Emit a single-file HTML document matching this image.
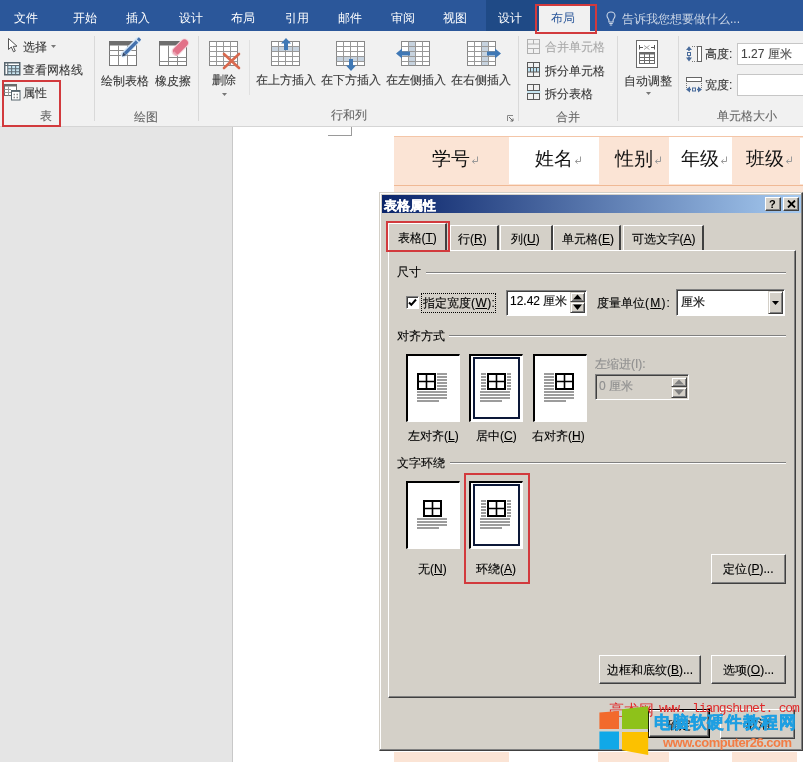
<!DOCTYPE html>
<html><head><meta charset="utf-8">
<style>
*{margin:0;padding:0;box-sizing:border-box}
html,body{width:803px;height:762px;overflow:hidden;background:#fff}
body{position:relative;font-family:"Liberation Sans",sans-serif;font-size:12px;color:#363636}
#ribbon ~ div .t{-webkit-text-stroke:0.1px currentColor}
.dt,.tab,.pbtn{-webkit-text-stroke:0.12px #000}
.a{position:absolute}
.t{position:absolute;white-space:nowrap;line-height:12px;font-size:12px}
#tabs{left:0;top:0;width:803px;height:31px;background:#2b579a}
#tabs .t{color:#fff;top:12px}
#ribbon{left:0;top:31px;width:803px;height:96px;background:#f1f1f1;border-bottom:1px solid #d5d5d5}
.sep{position:absolute;width:1px;background:#d9d9d9}
.gl{color:#666}
#back{left:0;top:127px;width:232px;height:635px;background:#e5e5e5}
#pageedge{left:232px;top:127px;width:1px;height:635px;background:#c8c8c8}
.red{position:absolute;border:2px solid #d23a3d;z-index:10}

.tt{position:absolute;top:149px;font-size:19px;line-height:19px;color:#111;white-space:nowrap}
.tt i{font-style:normal;font-size:9px;color:#888;margin-left:1px}

.btn3d{position:absolute;background:#d4d0c8;border-top:1px solid #fff;border-left:1px solid #fff;border-right:1px solid #404040;border-bottom:1px solid #404040;box-shadow:inset -1px -1px 0 #808080}
.tab{position:absolute;top:225px;height:26px;background:#d4d0c8;border-top:1px solid #fff;border-left:1px solid #fff;border-right:2px solid #404040;font-size:12px;line-height:12px;color:#000;text-align:left;padding-top:7px;white-space:nowrap}
.tab.act{border-right:2px solid #404040;padding-top:8px;z-index:2}
u{text-decoration:underline;text-underline-offset:1px}
.dt{color:#000}
.etch{position:absolute;height:2px;border-top:1px solid #808080;border-bottom:1px solid #fff}
.chk{position:absolute;width:13px;height:13px;background:#fff;border-top:1px solid #808080;border-left:1px solid #808080;border-right:1px solid #fff;border-bottom:1px solid #fff;box-shadow:inset 1px 1px 0 #404040}
.sunk{position:absolute;border-top:1px solid #808080;border-left:1px solid #808080;border-right:1px solid #fff;border-bottom:1px solid #fff;box-shadow:inset 1px 1px 0 #404040}
.spin{position:absolute;background:#d4d0c8;border-top:1px solid #d4d0c8;border-left:1px solid #d4d0c8;border-right:1px solid #404040;border-bottom:1px solid #404040;box-shadow:inset 1px 1px 0 #fff,inset -1px -1px 0 #808080}
.spin svg{position:absolute;left:-1px;top:-1px}
.pic{position:absolute;width:54px;height:68px;background:#fff;border-top:2px solid #000;border-left:2px solid #000;border-right:1px solid #fff;border-bottom:1px solid #fff}
.pic svg{position:absolute;left:-2px;top:-2px}
.pbtn{position:absolute;background:#d4d0c8;border-top:1px solid #fff;border-left:1px solid #fff;border-right:1px solid #404040;border-bottom:1px solid #404040;box-shadow:inset -1px -1px 0 #808080;font-size:12px;line-height:12px;color:#000;text-align:center;white-space:nowrap;padding-top:8px}
.t,.tab,.pbtn,.tt{will-change:transform}
</style></head><body>

<!-- tab bar -->
<div id="tabs" class="a">
  <div class="a" style="left:486px;top:0;width:104px;height:31px;background:#1f4a86"></div>
  <div class="a" style="left:539px;top:6px;width:51px;height:25px;background:#f1f1f1"></div>
  <div class="t" style="left:14px">文件</div>
  <div class="t" style="left:73px">开始</div>
  <div class="t" style="left:126px">插入</div>
  <div class="t" style="left:179px">设计</div>
  <div class="t" style="left:231px">布局</div>
  <div class="t" style="left:285px">引用</div>
  <div class="t" style="left:338px">邮件</div>
  <div class="t" style="left:391px">审阅</div>
  <div class="t" style="left:443px">视图</div>
  <div class="t" style="left:498px">设计</div>
  <div class="t" style="left:551px;color:#2b579a">布局</div>
  <svg class="a" style="left:606px;top:11px" width="10" height="15" viewBox="0 0 10 15"><path d="M5 1C2.5 1 1 2.8 1 4.8C1 6.6 2.4 7.6 2.9 9V11H7.1V9C7.6 7.6 9 6.6 9 4.8C9 2.8 7.5 1 5 1Z" fill="none" stroke="#cbd6e6" stroke-width="1.1"/><path d="M3.2 12.5H6.8M3.8 14H6.2" stroke="#cbd6e6" stroke-width="1"/></svg>
  <div class="t" style="left:622px;top:13px;color:#cbd6e6">告诉我您想要做什么...</div>
</div>
<div class="red" style="left:535px;top:4px;width:62px;height:30px"></div>

<!-- ribbon -->
<div id="ribbon" class="a"></div>


<!-- ribbon content -->
<div class="a" style="left:0;top:31px;width:803px;height:95px">
 <!-- group 表 -->
 <svg class="a" style="left:7px;top:6px" width="12" height="16" viewBox="0 0 12 16"><path d="M1.5 1.5 L1.5 12.5 L4.3 10 L6.5 14.8 L8.3 14 L6.2 9.4 L10 9.2 Z" fill="#fff" stroke="#555" stroke-width="1" stroke-linejoin="round"/></svg>
 <div class="t" style="left:23px;top:10px">选择</div>
 <svg class="a" style="left:51px;top:14px" width="6" height="4"><path d="M0 0H5L2.5 3Z" fill="#777"/></svg>
 <svg class="a" style="left:4px;top:31px" width="17" height="14" viewBox="0 0 17 14"><rect x="0.75" y="0.75" width="15" height="12" fill="#fff"/><rect x="3.75" y="3.5" width="12" height="9.25" fill="#c9e6f2"/><rect x="0.75" y="0.75" width="15" height="12" fill="none" stroke="#58666f" stroke-width="1.5"/><path d="M3.75 0.75V12.75M0.75 3.5H15.75M3.75 6.75H15.75M3.75 9.75H15.75M7.6 3.5V12.75M11.6 3.5V12.75" stroke="#5f6d76" stroke-width="1.1"/></svg>
 <div class="t" style="left:23px;top:32.5px">查看网格线</div>
 <svg class="a" style="left:4px;top:53px" width="17" height="17" viewBox="0 0 17 17"><rect x="0.5" y="0.5" width="12" height="11" fill="#fff" stroke="#6b6b6b"/><rect x="0" y="0" width="13" height="2.5" fill="#6b6b6b"/><path d="M0.5 5.5H7M0.5 8.5H7M4.5 2.5V11.5" stroke="#9a9a9a"/><rect x="7.5" y="6.5" width="8.5" height="9.5" fill="#fff" stroke="#58666f"/><path d="M7.5 7.2H16" stroke="#58666f" stroke-width="1.4"/><path d="M9.5 10.5H11M12.5 10.5H14M9.5 13.5H11M12.5 13.5H14" stroke="#8a8a8a" stroke-width="1.3"/></svg>
 <div class="t" style="left:23px;top:55.5px">属性</div>
 <div class="t gl" style="left:39.5px;top:79px">表</div>
 <div class="sep" style="left:94px;top:5px;height:85px"></div>

 <!-- group 绘图 -->
 <svg class="a" style="left:108px;top:6px" width="36" height="30" viewBox="0 0 36 30"><rect x="1.5" y="4.5" width="27" height="24" fill="#fff" stroke="#777"/><rect x="1" y="4" width="28" height="4.5" fill="#6d6d6d"/><path d="M1.5 13.5H28.5M1.5 18.5H28.5M10.5 8.5V28.5M19.5 8.5V28.5" stroke="#8a8a8a"/><path d="M15.5 17.5L30 3" stroke="#d4e6f6" stroke-width="5.5" stroke-linecap="round"/><path d="M17 16.5L29 4.5" stroke="#4471ad" stroke-width="3.2"/><path d="M30 3.5L32 1.5" stroke="#4471ad" stroke-width="3.2"/><path d="M14 19.5L15.3 15.3L18.5 18.2Z" fill="#35496a"/></svg>
 <div class="t" style="left:101px;top:43.5px">绘制表格</div>
 <svg class="a" style="left:158px;top:6px" width="34" height="30" viewBox="0 0 34 30"><rect x="1.5" y="4.5" width="27" height="24" fill="#fff" stroke="#777"/><rect x="1" y="4" width="28" height="4.5" fill="#6d6d6d"/><path d="M10.5 8.5V28.5M19.5 18V28.5M10.5 20.5H28.5M1.5 24.5H28.5" stroke="#8a8a8a"/><path d="M18 14.5L26.5 6" stroke="#f3d3da" stroke-width="9" stroke-linecap="round"/><path d="M18.5 14L26.5 6" stroke="#e27289" stroke-width="7" stroke-linecap="round"/><path d="M15.5 15L19 18.5" stroke="#eaa0b0" stroke-width="2"/></svg>
 <div class="t" style="left:155px;top:43.5px">橡皮擦</div>
 <div class="t gl" style="left:134px;top:80px">绘图</div>
 <div class="sep" style="left:198px;top:5px;height:85px"></div>

 <!-- group 行和列 -->
 <svg class="a" style="left:208px;top:9px" width="33" height="31" viewBox="0 0 33 31"><rect x="1.5" y="1.5" width="28" height="24" fill="#fff" stroke="#888"/><path d="M1.5 6.5H29.5M1.5 11.5H29.5M1.5 16.5H29.5M1.5 21.5H29.5M8.5 1.5V25.5M15.5 1.5V25.5M22.5 1.5V25.5" stroke="#999"/><path d="M16 14 L31 28 M31 14 L16 28" stroke="#d9694e" stroke-width="2.6" stroke-linecap="round"/></svg>
 <div class="t" style="left:212px;top:43px">删除</div>
 <svg class="a" style="left:222px;top:62px" width="6" height="4"><path d="M0 0H5L2.5 3Z" fill="#777"/></svg>
 <div class="sep" style="left:249px;top:9px;height:55px;background:#e0e0e0"></div>

 <svg class="a" style="left:270px;top:6px" width="31" height="30" viewBox="0 0 31 30"><rect x="1.5" y="4.5" width="28" height="24" fill="#fff" stroke="#888"/><rect x="2" y="9.5" width="27" height="5" fill="#c7d3df"/><path d="M1.5 9.5H29.5M1.5 14.5H29.5M1.5 19.5H29.5M1.5 24.5H29.5M8.5 4.5V28.5M15.5 4.5V28.5M22.5 4.5V28.5" stroke="#999"/><path d="M16 1 L21 6.5 H18 V13 H14 V6.5 H11Z" fill="#3f78b5"/></svg>
 <div class="t" style="left:256px;top:43px">在上方插入</div>
 <svg class="a" style="left:335px;top:9px" width="31" height="32" viewBox="0 0 31 32"><rect x="1.5" y="1.5" width="28" height="24" fill="#fff" stroke="#888"/><rect x="2" y="16.5" width="27" height="5" fill="#c7d3df"/><path d="M1.5 6.5H29.5M1.5 11.5H29.5M1.5 16.5H29.5M1.5 21.5H29.5M8.5 1.5V25.5M15.5 1.5V25.5M22.5 1.5V25.5" stroke="#999"/><path d="M16 31 L21 25.5 H18 V19 H14 V25.5 H11Z" fill="#3f78b5"/></svg>
 <div class="t" style="left:321px;top:43px">在下方插入</div>
 <svg class="a" style="left:396px;top:9px" width="36" height="27" viewBox="0 0 36 27"><rect x="5.5" y="1.5" width="28" height="24" fill="#fff" stroke="#888"/><rect x="12.5" y="2" width="7" height="23" fill="#c7d3df"/><path d="M5.5 6.5H33.5M5.5 11.5H33.5M5.5 16.5H33.5M5.5 21.5H33.5M12.5 1.5V25.5M19.5 1.5V25.5M26.5 1.5V25.5" stroke="#999"/><path d="M0 13.5 L6 8.5 V11.5 H14 V15.5 H6 V18.5Z" fill="#3f78b5"/></svg>
 <div class="t" style="left:386px;top:43px">在左侧插入</div>
 <svg class="a" style="left:466px;top:9px" width="36" height="27" viewBox="0 0 36 27"><rect x="1.5" y="1.5" width="28" height="24" fill="#fff" stroke="#888"/><rect x="15.5" y="2" width="7" height="23" fill="#c7d3df"/><path d="M1.5 6.5H29.5M1.5 11.5H29.5M1.5 16.5H29.5M1.5 21.5H29.5M8.5 1.5V25.5M15.5 1.5V25.5M22.5 1.5V25.5" stroke="#999"/><path d="M35 13.5 L29 8.5 V11.5 H21 V15.5 H29 V18.5Z" fill="#3f78b5"/></svg>
 <div class="t" style="left:451px;top:43px">在右侧插入</div>
 <div class="t gl" style="left:331px;top:78px">行和列</div>
 <svg class="a" style="left:507px;top:84px" width="7" height="7" viewBox="0 0 7 7"><path d="M0.5 6V0.5H6" stroke="#888" fill="none"/><path d="M2 2L6 6M6 3.5V6H3.5" stroke="#666" fill="none"/></svg>
 <div class="sep" style="left:518px;top:5px;height:85px"></div>

 <!-- group 合并 -->
 <svg class="a" style="left:527px;top:8px" width="14" height="15" viewBox="0 0 14 15"><rect x="0.5" y="0.5" width="12" height="14" fill="none" stroke="#b0b0b0"/><path d="M0.5 5H12.5M0.5 9.5H12.5M6.5 0.5V5M6.5 9.5V14.5" stroke="#b0b0b0"/></svg>
 <div class="t" style="left:545px;top:10px;color:#a8a8a8">合并单元格</div>
 <svg class="a" style="left:527px;top:31px" width="14" height="15" viewBox="0 0 14 15"><rect x="1" y="5.5" width="11" height="4.5" fill="#bfe3f2"/><rect x="0.5" y="0.5" width="12" height="14" fill="none" stroke="#5b5b5b"/><path d="M0.5 5.5H12.5M0.5 10H12.5M6.5 0.5V14.5M3.5 5.5V10M9.5 5.5V10" stroke="#5b5b5b"/></svg>
 <div class="t" style="left:545px;top:34px">拆分单元格</div>
 <svg class="a" style="left:527px;top:53px" width="14" height="17" viewBox="0 0 14 17"><rect x="0.5" y="0.5" width="12" height="6" fill="none" stroke="#5b5b5b"/><rect x="0.5" y="9.5" width="12" height="6" fill="none" stroke="#5b5b5b"/><path d="M6.5 0.5V6.5M6.5 9.5V15.5" stroke="#5b5b5b"/><path d="M0 8H13.5" stroke="#bfe3f2" stroke-width="1.6"/></svg>
 <div class="t" style="left:545px;top:56.5px">拆分表格</div>
 <div class="t gl" style="left:555.5px;top:79.5px">合并</div>
 <div class="sep" style="left:617px;top:5px;height:85px"></div>

 <!-- group 单元格大小 -->
 <svg class="a" style="left:636px;top:9px" width="22" height="28" viewBox="0 0 22 28"><rect x="0.5" y="0.5" width="21" height="27" fill="#fff" stroke="#6a6a6a"/><path d="M3.5 5V9.5M18.5 5V9.5M3.5 7.5H7M15 7.5H18.5" stroke="#555" stroke-width="1"/><path d="M8 5.5L13.5 9.5M13.5 5.5L8 9.5" stroke="#9a9a9a" stroke-width="0.9"/><rect x="3.5" y="12.5" width="15" height="11" fill="#fff" stroke="#6a6a6a"/><rect x="3" y="12" width="16" height="2.5" fill="#6a6a6a"/><path d="M3.5 17.5H18.5M3.5 20.5H18.5M8.5 14V23.5M13.5 14V23.5" stroke="#6a6a6a"/></svg>
 <div class="t" style="left:624px;top:43.5px">自动调整</div>
 <svg class="a" style="left:646px;top:61px" width="6" height="4"><path d="M0 0H5L2.5 3Z" fill="#777"/></svg>
 <div class="sep" style="left:678px;top:5px;height:85px"></div>

 <svg class="a" style="left:685px;top:14px" width="18" height="18" viewBox="0 0 18 18"><path d="M1 5L4 1.2L7 5Z" fill="#4a6c9c"/><path d="M4 4V6" stroke="#4a6c9c" stroke-width="1.6"/><rect x="2.5" y="7.5" width="3" height="3" fill="none" stroke="#4a6c9c"/><path d="M1 12.5L4 16.5L7 12.5Z" fill="#4a6c9c"/><path d="M4 11.5V13.5" stroke="#4a6c9c" stroke-width="1.6"/><path d="M7 1.5H11.5M7 16.5H11.5" stroke="#777" stroke-dasharray="1 1"/><rect x="12.5" y="1.5" width="4" height="15" fill="#fff" stroke="#666"/></svg>
 <div class="t" style="left:705px;top:17px">高度:</div>
 <div class="a" style="left:737px;top:12px;width:70px;height:22px;background:#fff;border:1px solid #c6c6c6"></div>
 <div class="t" style="left:741px;top:17px;color:#444">1.27 厘米</div>
 <svg class="a" style="left:685px;top:45px" width="18" height="19" viewBox="0 0 18 19"><rect x="1.5" y="1.5" width="15" height="4" fill="#fff" stroke="#666"/><path d="M1.5 7V12M16.5 7V12" stroke="#777" stroke-dasharray="1 1"/><path d="M1 13.5L5 10.5V16.5Z" fill="#4a6c9c"/><path d="M17 13.5L13 10.5V16.5Z" fill="#4a6c9c"/><path d="M4 13.5H6M12 13.5H14" stroke="#4a6c9c" stroke-width="1.6"/><rect x="7.5" y="12" width="3" height="3" fill="none" stroke="#4a6c9c"/></svg>
 <div class="t" style="left:705px;top:48px">宽度:</div>
 <div class="a" style="left:737px;top:43px;width:70px;height:22px;background:#fff;border:1px solid #c6c6c6"></div>
 <div class="t gl" style="left:717px;top:79px">单元格大小</div>
</div>
<div class="red" style="left:2px;top:80px;width:59px;height:47px"></div>

<!-- backdrop -->
<div id="back" class="a"></div>
<div id="pageedge" class="a"></div>


<!-- page & table -->
<div class="a" style="left:233px;top:127px;width:570px;height:635px;background:#fff"></div>
<div class="a" style="left:328px;top:135px;width:24px;height:1px;background:#9a9a9a"></div>
<div class="a" style="left:351px;top:127px;width:1px;height:9px;background:#9a9a9a"></div>
<div class="a" style="left:394px;top:137px;width:409px;height:55px;background:#fbe4d5"></div>
<div class="a" style="left:394px;top:136px;width:409px;height:1px;background:#f4c6a8"></div>
<div class="a" style="left:800px;top:138px;width:3px;height:46px;background:#fff"></div>
<div class="a" style="left:509px;top:137px;width:90px;height:47px;background:#fff"></div>
<div class="a" style="left:669px;top:137px;width:63px;height:47px;background:#fff"></div>
<div class="a" style="left:394px;top:185px;width:409px;height:1px;background:#f0b995"></div>
<div class="a" style="left:394px;top:752px;width:115px;height:10px;background:#fbe4d5"></div>
<div class="a" style="left:598px;top:752px;width:71px;height:10px;background:#fbe4d5"></div>
<div class="a" style="left:732px;top:752px;width:65px;height:10px;background:#fbe4d5"></div>
<div class="tt" style="left:432px">学号<svg width="8" height="9" viewBox="0 0 8 9" style="margin-left:1px;vertical-align:0px"><path d="M6.5 0.5V5.5H1.5M3.5 3.5L1.3 5.5L3.5 7.5" fill="none" stroke="#9a9a9a" stroke-width="1"/></svg></div>
<div class="tt" style="left:534.5px">姓名<svg width="8" height="9" viewBox="0 0 8 9" style="margin-left:1px;vertical-align:0px"><path d="M6.5 0.5V5.5H1.5M3.5 3.5L1.3 5.5L3.5 7.5" fill="none" stroke="#9a9a9a" stroke-width="1"/></svg></div>
<div class="tt" style="left:615px">性别<svg width="8" height="9" viewBox="0 0 8 9" style="margin-left:1px;vertical-align:0px"><path d="M6.5 0.5V5.5H1.5M3.5 3.5L1.3 5.5L3.5 7.5" fill="none" stroke="#9a9a9a" stroke-width="1"/></svg></div>
<div class="tt" style="left:681px">年级<svg width="8" height="9" viewBox="0 0 8 9" style="margin-left:1px;vertical-align:0px"><path d="M6.5 0.5V5.5H1.5M3.5 3.5L1.3 5.5L3.5 7.5" fill="none" stroke="#9a9a9a" stroke-width="1"/></svg></div>
<div class="tt" style="left:746px">班级<svg width="8" height="9" viewBox="0 0 8 9" style="margin-left:1px;vertical-align:0px"><path d="M6.5 0.5V5.5H1.5M3.5 3.5L1.3 5.5L3.5 7.5" fill="none" stroke="#9a9a9a" stroke-width="1"/></svg></div>

<!-- dialog -->
<div class="a" id="dlg" style="left:379px;top:192px;width:424px;height:559px;background:#d4d0c8;border-top:1px solid #d4d0c8;border-left:1px solid #d4d0c8;border-bottom:1px solid #404040;border-right:1px solid #404040">
  <div class="a" style="left:0;top:0;width:100%;height:1px;background:#fff"></div>
  <div class="a" style="left:0;top:0;width:1px;height:100%;background:#fff"></div>
  <div class="a" style="left:0;bottom:0;width:100%;height:1px;background:#808080"></div>
  <div class="a" style="right:0;top:0;width:1px;height:100%;background:#808080"></div>
</div>
<div class="a" style="left:382px;top:195px;width:419px;height:18px;background:linear-gradient(to right,#0a246a 0%,#a6caf0 100%)"></div>
<div class="t" style="left:383.5px;top:199px;font-size:13px;line-height:13px;font-weight:bold;color:#fff;-webkit-text-stroke:0.35px #fff">表格属性</div>
<div class="btn3d" style="left:765px;top:197px;width:16px;height:14px"></div>
<div class="t" style="left:769px;top:199px;font-size:11px;line-height:11px;font-weight:bold;color:#000">?</div>
<div class="btn3d" style="left:783px;top:197px;width:16px;height:14px"></div>
<svg class="a" style="left:787px;top:200px" width="9" height="8" viewBox="0 0 9 8"><path d="M1 0.5L8 7.5M8 0.5L1 7.5" stroke="#000" stroke-width="1.8"/></svg>

<!-- tabs -->
<div class="tab" style="left:450px;width:49px;padding-left:7px">行(<u>R</u>)</div>
<div class="tab" style="left:500px;width:53px;padding-left:10px">列(<u>U</u>)</div>
<div class="tab" style="left:553px;width:68px;padding-left:8px">单元格(<u>E</u>)</div>
<div class="tab" style="left:623px;width:81px;padding-left:7.5px">可选文字(<u>A</u>)</div>
<!-- panel -->
<div class="a" style="left:388px;top:250px;width:408px;height:448px;border-top:1px solid #fff;border-left:1px solid #fff;border-right:1px solid #404040;border-bottom:1px solid #404040"><div class="a" style="right:0;top:0;width:1px;height:100%;background:#808080"></div><div class="a" style="left:0;bottom:0;width:100%;height:1px;background:#808080"></div></div>
<div class="tab act" style="left:388px;top:223px;width:59px;height:29px;padding-left:8.5px">表格(<u>T</u>)</div>

<!-- 尺寸 -->
<div class="t dt" style="left:397px;top:266px">尺寸</div>
<div class="etch" style="left:426px;top:272px;width:360px"></div>
<div class="chk" style="left:406px;top:296px"></div>
<svg class="a" style="left:408px;top:298px" width="9" height="9" viewBox="0 0 9 9"><path d="M1 4.5L3.3 6.8L8 1.5" stroke="#000" stroke-width="2" fill="none"/></svg>
<div class="a" style="left:421px;top:293px;width:75px;height:20px;border:1px dotted #000"></div>
<div class="t dt" style="left:423px;top:296.5px">指定宽度<span style="letter-spacing:0.4px">(<u>W</u>):</span></div>
<div class="sunk" style="left:506px;top:290px;width:81px;height:26px;background:#fff"></div>
<div class="t dt" style="left:510px;top:295px">12.42 厘米</div>
<div class="spin" style="left:570px;top:292px;width:15px;height:10px"><svg width="15" height="10"><path d="M3 7.5H12L7.5 2.5Z" fill="#000"/></svg></div>
<div class="spin" style="left:570px;top:302px;width:15px;height:11px"><svg width="15" height="11"><path d="M3 2.5H12L7.5 8Z" fill="#000"/></svg></div>
<div class="t dt" style="left:596.5px;top:296.5px">度量单位<span style="letter-spacing:1.2px">(<u>M</u>):</span></div>
<div class="sunk" style="left:676px;top:289px;width:109px;height:27px;background:#fff"></div>
<div class="t dt" style="left:681px;top:296px">厘米</div>
<div class="spin" style="left:768px;top:291px;width:15px;height:23px"><svg width="15" height="23"><path d="M4 10H11L7.5 14Z" fill="#000"/></svg></div>

<!-- 对齐方式 -->
<div class="t dt" style="left:397px;top:329.5px">对齐方式</div>
<div class="etch" style="left:449px;top:335px;width:337px"></div>
<div class="pic" style="left:406px;top:354px"><svg width="54" height="68"><rect x="12" y="20" width="17" height="15" fill="none" stroke="#000" stroke-width="2"/><path d="M20.5 20V35M12 27.5H29" stroke="#000" stroke-width="1.6"/><path d="M31 20H41M31 23H41M31 26H41M31 29H41M31 32H41M31 35H41M11 38H41M11 41H41M11 44H41M11 47H33" stroke="#7c7c7c" stroke-width="1.7"/></svg></div>
<div class="pic" style="left:469px;top:354px"><svg width="54" height="68"><rect x="19" y="20" width="17" height="15" fill="none" stroke="#000" stroke-width="2"/><path d="M27.5 20V35M19 27.5H36" stroke="#000" stroke-width="1.6"/><path d="M12 20H17M12 23H17M12 26H17M12 29H17M12 32H17M12 35H17M38 20H42M38 23H42M38 26H42M38 29H42M38 32H42M38 35H42M11 38H41M11 41H41M11 44H41M11 47H33" stroke="#7c7c7c" stroke-width="1.7"/><rect x="5" y="4" width="45" height="60" fill="none" stroke="#0c1838" stroke-width="2"/></svg></div>
<div class="pic" style="left:533px;top:354px"><svg width="54" height="68"><rect x="23" y="20" width="17" height="15" fill="none" stroke="#000" stroke-width="2"/><path d="M31.5 20V35M23 27.5H40" stroke="#000" stroke-width="1.6"/><path d="M11 20H21M11 23H21M11 26H21M11 29H21M11 32H21M11 35H21M11 38H41M11 41H41M11 44H41M11 47H33" stroke="#7c7c7c" stroke-width="1.7"/></svg></div>
<div class="t dt" style="left:408px;top:429.5px">左对齐(<u>L</u>)</div>
<div class="t dt" style="left:476px;top:429.5px">居中(<u>C</u>)</div>
<div class="t dt" style="left:532px;top:429.5px">右对齐(<u>H</u>)</div>
<div class="t dt" style="left:595px;top:357.5px;color:#8f8f8f;-webkit-text-stroke:0.15px #8f8f8f">左缩进(I):</div>
<div class="sunk" style="left:595px;top:374px;width:94px;height:26px"></div>
<div class="t dt" style="left:599px;top:380px;color:#8f8f8f;-webkit-text-stroke:0.15px #8f8f8f">0 厘米</div>
<div class="spin" style="left:671px;top:377px;width:16px;height:10px"><svg width="16" height="10"><path d="M3 7.5H13L8 2.5Z" fill="#808080"/></svg></div>
<div class="spin" style="left:671px;top:387px;width:16px;height:11px"><svg width="16" height="11"><path d="M3 2.5H13L8 8Z" fill="#808080"/></svg></div>

<!-- 文字环绕 -->
<div class="t dt" style="left:397px;top:457px">文字环绕</div>
<div class="etch" style="left:450px;top:462px;width:336px"></div>
<div class="pic" style="left:406px;top:481px"><svg width="54" height="68"><rect x="18" y="20" width="17" height="15" fill="none" stroke="#000" stroke-width="2"/><path d="M26.5 20V35M18 27.5H35" stroke="#000" stroke-width="1.6"/><path d="M11 38H41M11 41H41M11 44H41M11 47H33" stroke="#7c7c7c" stroke-width="1.7"/></svg></div>
<div class="pic" style="left:469px;top:481px"><svg width="54" height="68"><rect x="19" y="20" width="17" height="15" fill="none" stroke="#000" stroke-width="2"/><path d="M27.5 20V35M19 27.5H36" stroke="#000" stroke-width="1.6"/><path d="M12 20H17M12 23H17M12 26H17M12 29H17M12 32H17M12 35H17M38 20H42M38 23H42M38 26H42M38 29H42M38 32H42M38 35H42M11 38H41M11 41H41M11 44H41M11 47H33" stroke="#7c7c7c" stroke-width="1.7"/><rect x="5" y="4" width="45" height="60" fill="none" stroke="#0c1838" stroke-width="2"/></svg></div>
<div class="t dt" style="left:418px;top:563px">无(<u>N</u>)</div>
<div class="t dt" style="left:476px;top:563px">环绕(<u>A</u>)</div>

<div class="pbtn" style="left:711px;top:554px;width:75px;height:30px">定位(<u>P</u>)...</div>
<div class="pbtn" style="left:599px;top:655px;width:102px;height:29px">边框和底纹(<u>B</u>)...</div>
<div class="pbtn" style="left:711px;top:655px;width:75px;height:29px">选项(<u>O</u>)...</div>
<div class="a" style="left:648px;top:709px;width:62px;height:29px;border:1px solid #000"><div class="pbtn" style="left:0;top:0;width:60px;height:27px">确定</div></div>
<div class="pbtn" style="left:720px;top:709px;width:75px;height:30px">取消</div>

<div class="red" style="left:386px;top:221px;width:64px;height:31px"></div>
<div class="red" style="left:464px;top:473px;width:66px;height:111px"></div>

<!-- watermark -->
<div class="t" style="left:608.5px;top:702.5px;font-family:'Liberation Serif',serif;font-size:14.5px;line-height:14.5px;color:#e02a2a;z-index:20">亮术网</div>
<div class="t" style="left:659px;top:702px;font-family:'Liberation Mono',monospace;font-size:13px;line-height:13px;letter-spacing:-1.15px;color:#e02a2a;z-index:20">www. liangshunet. com</div>
<svg class="a" style="left:598px;top:705px;z-index:21" width="52" height="52" viewBox="598 705 52 52"><path d="M599.4 712.4L619 711.1V729H599.4Z" fill="#f26a2c"/><path d="M622 709.3L648.2 706.3V729H622Z" fill="#8ec21a"/><path d="M599.4 731.6H619V749.6L599.4 749.4Z" fill="#10a8e8"/><path d="M622 732H648.2V755.1L622 750.3Z" fill="#fcc100"/></svg>
<div class="t" style="left:653.5px;top:713.5px;font-size:16.5px;line-height:16.5px;font-weight:bold;color:#1e9fe2;z-index:22;-webkit-text-stroke:0.5px #1e9fe2;letter-spacing:0.8px">电脑软硬件教程网</div>
<div class="t" style="left:663px;top:736px;font-size:13px;line-height:13px;font-weight:bold;letter-spacing:-0.5px;color:#f27d45;z-index:22">www.computer26.com</div>
</body></html>
